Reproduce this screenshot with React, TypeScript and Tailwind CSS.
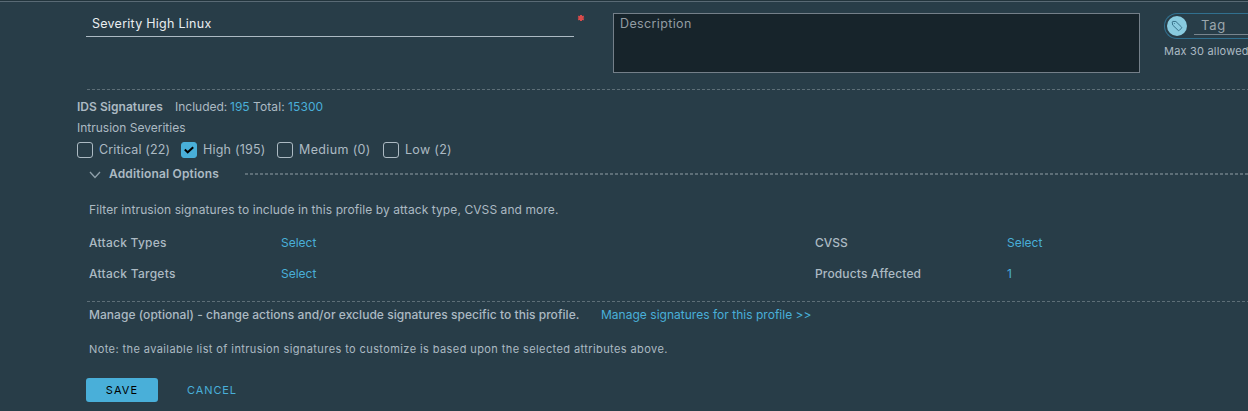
type SeverityProps = { label: string; width: string; tracking: string; checked?: boolean };

function Dashes({ className }: { className: string }) {
  return (
    <div
      className={`bg-[repeating-linear-gradient(90deg,#5d6e77_0px,#5d6e77_3px,transparent_3px,transparent_5px)] ${className}`}
    />
  );
}

function Severity({ label, width, tracking, checked }: SeverityProps) {
  return (
    <label className={`flex shrink-0 items-center ${width}`}>
      <span
        className={`flex size-4 items-center justify-center rounded-[3px] border ${
          checked ? "border-[#49afd9] bg-[#49afd9]" : "border-[#acbac3]"
        }`}
      >
        {checked && (
          <svg width="10" height="8" viewBox="0 0 10 8" fill="none" stroke="#000" strokeWidth="2">
            <path d="M0.8 3.6 L3.7 6.3 L9.2 1.2" />
          </svg>
        )}
      </span>
      <span className={`ml-[6px] whitespace-nowrap text-[12.5px] ${tracking}`}>{label}</span>
    </label>
  );
}

export default function App() {
  return (
    <div className="flex h-[411px] w-full flex-col overflow-hidden bg-[#283d48] font-[Inter,sans-serif] text-[12px] leading-4 text-[#acbac3]">
      <div className="h-[2px] shrink-0 border-b border-[#596a75] bg-[#22343c]" />

      <div className="flex h-[87px] shrink-0 pl-[86px]">
        <div className="mt-[10px] flex h-[25px] w-[488px] shrink-0 items-center border-b border-[#acbac3] pl-[6px] text-[12.5px] tracking-[0.26px] text-[#eaedf0]">
          Severity High Linux
        </div>
        <svg className="ml-[3px] mt-[12px] shrink-0" width="8" height="8" viewBox="0 0 8 8" stroke="#d94b4b" strokeWidth="2">
          <path d="M4 1V7M1.2 2.4L6.8 5.6M6.8 2.4L1.2 5.6" />
        </svg>
        <div className="ml-[28px] mt-[11px] h-[60px] w-[527px] shrink-0 border border-[#747f89] bg-[#17242b] px-[6px] pt-[2px] text-[12.5px] tracking-[0.37px] text-[#929ca2]">
          Description
        </div>
        <div className="ml-[24px] mt-[11px] w-[150px] shrink-0">
          <div className="flex h-[26px] items-center rounded-l-[13px] border border-r-0 border-[#31708f] pl-[2px]">
            <span className="flex size-5 shrink-0 items-center justify-center rounded-full bg-[#89cbdf]">
              <svg width="12" height="12" viewBox="0 0 12 12" fill="none" stroke="#38728a" strokeWidth="1">
                <path d="M1.2 1.9 L1.7 5.1 L7.2 10.4 Q7.8 10.9 8.4 10.3 L10.5 8.1 Q11 7.5 10.4 6.9 L4.9 1.5 L1.7 1.4 Z" />
                <circle cx="3.4" cy="3.4" r="0.5" fill="#38728a" stroke="none" />
              </svg>
            </span>
            <span className="mb-[1px] ml-[7px] h-[19px] flex-1 border-b border-[#78858e] pl-[7px] text-[13px] leading-[18px] tracking-[0.8px] text-[#9ba6ad]">
              Tag
            </span>
          </div>
          <div className="mt-[4px] whitespace-nowrap text-[11px] tracking-[0.2px]">Max 30 allowed</div>
        </div>
      </div>

      <Dashes className="ml-[87px] h-px shrink-0" />

      <div className="mt-[9px] flex h-4 shrink-0 items-center whitespace-nowrap pl-[77px]">
        <span className="w-[98px] font-semibold tracking-[0.04px]">IDS Signatures</span>
        <span className="w-[55px]">Included:</span>
        <span className="w-[23px] text-[#49afd9]">195</span>
        <span className="w-[35px] tracking-[0.1px]">Total:</span>
        <span className="tracking-[0.1px] text-[#49afd9]">15300</span>
      </div>
      <div className="mt-[5px] h-4 shrink-0 pl-[77px]">Intrusion Severities</div>

      <div className="mt-[6px] flex h-4 shrink-0 pl-[77px]">
        <Severity label="Critical (22)" width="w-[104px]" tracking="tracking-[0.14px]" />
        <Severity label="High (195)" width="w-[96px]" tracking="tracking-[0.2px]" checked />
        <Severity label="Medium (0)" width="w-[106px]" tracking="tracking-[0.36px]" />
        <Severity label="Low (2)" width="w-[80px]" tracking="tracking-[0.3px]" />
      </div>

      <div className="mt-[8px] flex h-4 shrink-0 items-center pl-[89px]">
        <svg className="mt-[2px] shrink-0" width="12" height="8" viewBox="0 0 12 8" fill="none" stroke="#8fa0aa" strokeWidth="1.3">
          <path d="M1 1 L6 6.5 L11 1" />
        </svg>
        <span className="ml-[8px] w-[136px] shrink-0 font-semibold tracking-[0.16px]">Additional Options</span>
        <Dashes className="h-[2px] flex-1" />
      </div>

      <p className="mt-[20px] h-4 shrink-0 pl-[89px] tracking-[0.085px]">
        Filter intrusion signatures to include in this profile by attack type, CVSS and more.
      </p>

      <div className="mt-[17px] grid h-[47px] shrink-0 grid-cols-[192px_534px_192px_1fr] gap-y-[15px] whitespace-nowrap pl-[89px]">
        <span className="font-medium tracking-[0.26px]">Attack Types</span>
        <a className="text-[#49afd9]">Select</a>
        <span className="font-medium">CVSS</span>
        <a className="text-[#49afd9]">Select</a>
        <span className="font-medium tracking-[0.27px]">Attack Targets</span>
        <a className="text-[#49afd9]">Select</a>
        <span className="font-medium tracking-[0.14px]">Products Affected</span>
        <a className="text-[#49afd9]">1</a>
      </div>

      <Dashes className="ml-[87px] mt-[19px] h-px shrink-0" />

      <div className="mt-[5px] flex h-4 shrink-0 whitespace-nowrap pl-[89px]">
        <span className="w-[512px] font-medium tracking-[0.04px]">
          Manage (optional) - change actions and/or exclude signatures specific to this profile.
        </span>
        <a className="tracking-[0.02px] text-[#49afd9]">Manage signatures for this profile &gt;&gt;</a>
      </div>
      <p className="mt-[18px] h-4 shrink-0 whitespace-nowrap pl-[89px] text-[11px] tracking-[0.405px]">
        Note: the available list of intrusion signatures to customize is based upon the selected attributes above.
      </p>

      <div className="mt-[21px] flex h-6 shrink-0 items-center pl-[86px] text-[11px]">
        <button className="h-6 w-[72px] rounded-[3px] bg-[#49afd9] tracking-[1.1px] text-black">SAVE</button>
        <button className="ml-[29px] tracking-[0.9px] text-[#49afd9]">CANCEL</button>
      </div>
    </div>
  );
}
